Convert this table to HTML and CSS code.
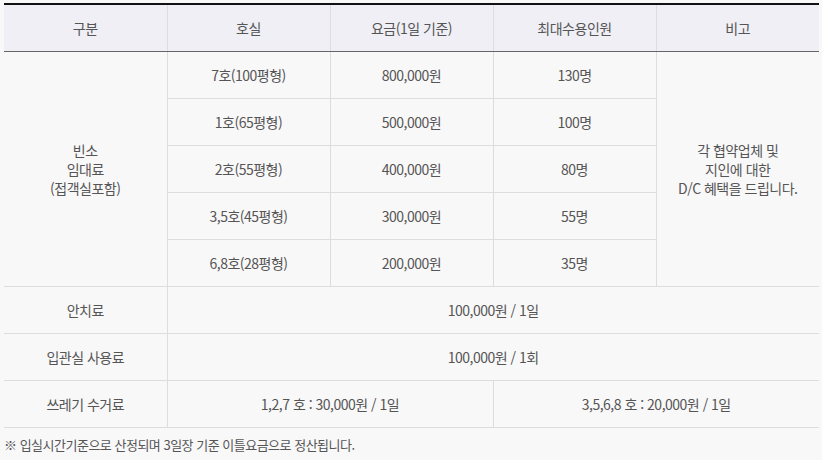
FILE: index.html
```html
<!DOCTYPE html>
<html lang="ko">
<head>
<meta charset="utf-8">
<link rel="stylesheet" href="styles.css">
</head>
<body>
<div class="wrap">
<table class="price">
  <colgroup>
    <col class="c1"><col class="c2"><col class="c3"><col class="c4"><col class="c5">
  </colgroup>
  <thead>
    <tr><th>구분</th><th>호실</th><th>요금(1일 기준)</th><th>최대수용인원</th><th>비고</th></tr>
  </thead>
  <tbody>
    <tr><td rowspan="5">빈소<br>임대료<br>(접객실포함)</td><td>7호(100평형)</td><td>800,000원</td><td>130명</td><td rowspan="5">각 협약업체 및<br>지인에 대한<br>D/C 혜택을 드립니다.</td></tr>
    <tr><td>1호(65평형)</td><td>500,000원</td><td>100명</td></tr>
    <tr><td>2호(55평형)</td><td>400,000원</td><td>80명</td></tr>
    <tr><td>3,5호(45평형)</td><td>300,000원</td><td>55명</td></tr>
    <tr><td>6,8호(28평형)</td><td>200,000원</td><td>35명</td></tr>
    <tr><td>안치료</td><td colspan="4">100,000원 / 1일</td></tr>
    <tr><td>입관실 사용료</td><td colspan="4">100,000원 / 1회</td></tr>
    <tr><td>쓰레기 수거료</td><td colspan="2">1,2,7 호 : 30,000원 / 1일</td><td colspan="2">3,5,6,8 호 : 20,000원 / 1일</td></tr>
  </tbody>
</table>
<p class="note">※ 입실시간기준으로 산정되며 3일장 기준 이틀요금으로 정산됩니다.</p>
</div>
</body>
</html>
```
FILE: styles.css
```css
html, body {
  margin: 0;
  padding: 0;
  background: #f9f8f9;
}
body {
  font-family: "Noto Sans CJK KR", "Noto Sans", sans-serif;
  color: #555;
  font-size: 14px;
}
.wrap {
  padding: 3px 3px 0 4px;
}
.price {
  width: 815px;
  border-collapse: collapse;
  table-layout: fixed;
  border-top: 2px solid #111;
}
.price col { width: 163px; }
.price th {
  background: #efeff5;
  font-weight: normal;
  height: 46px;
  padding: 0;
  border-left: 1px solid #ddd;
  border-bottom: 1px solid #666;
  letter-spacing: -0.5px;
}
.price th:first-child { border-left: none; }
.price td {
  height: 46px;
  padding: 0;
  text-align: center;
  border-left: 1px solid #ddd;
  border-bottom: 1px solid #ddd;
  line-height: 19px;
  letter-spacing: -0.5px;
}
.price tr td:first-child { border-left: none; }
.price tbody tr:nth-child(n+2):nth-child(-n+5) td:first-child { border-left: 1px solid #ddd; }
.note {
  margin: 8px 0 0 0;
  font-size: 13px;
  letter-spacing: -0.5px;
  line-height: 18px;
}
```
